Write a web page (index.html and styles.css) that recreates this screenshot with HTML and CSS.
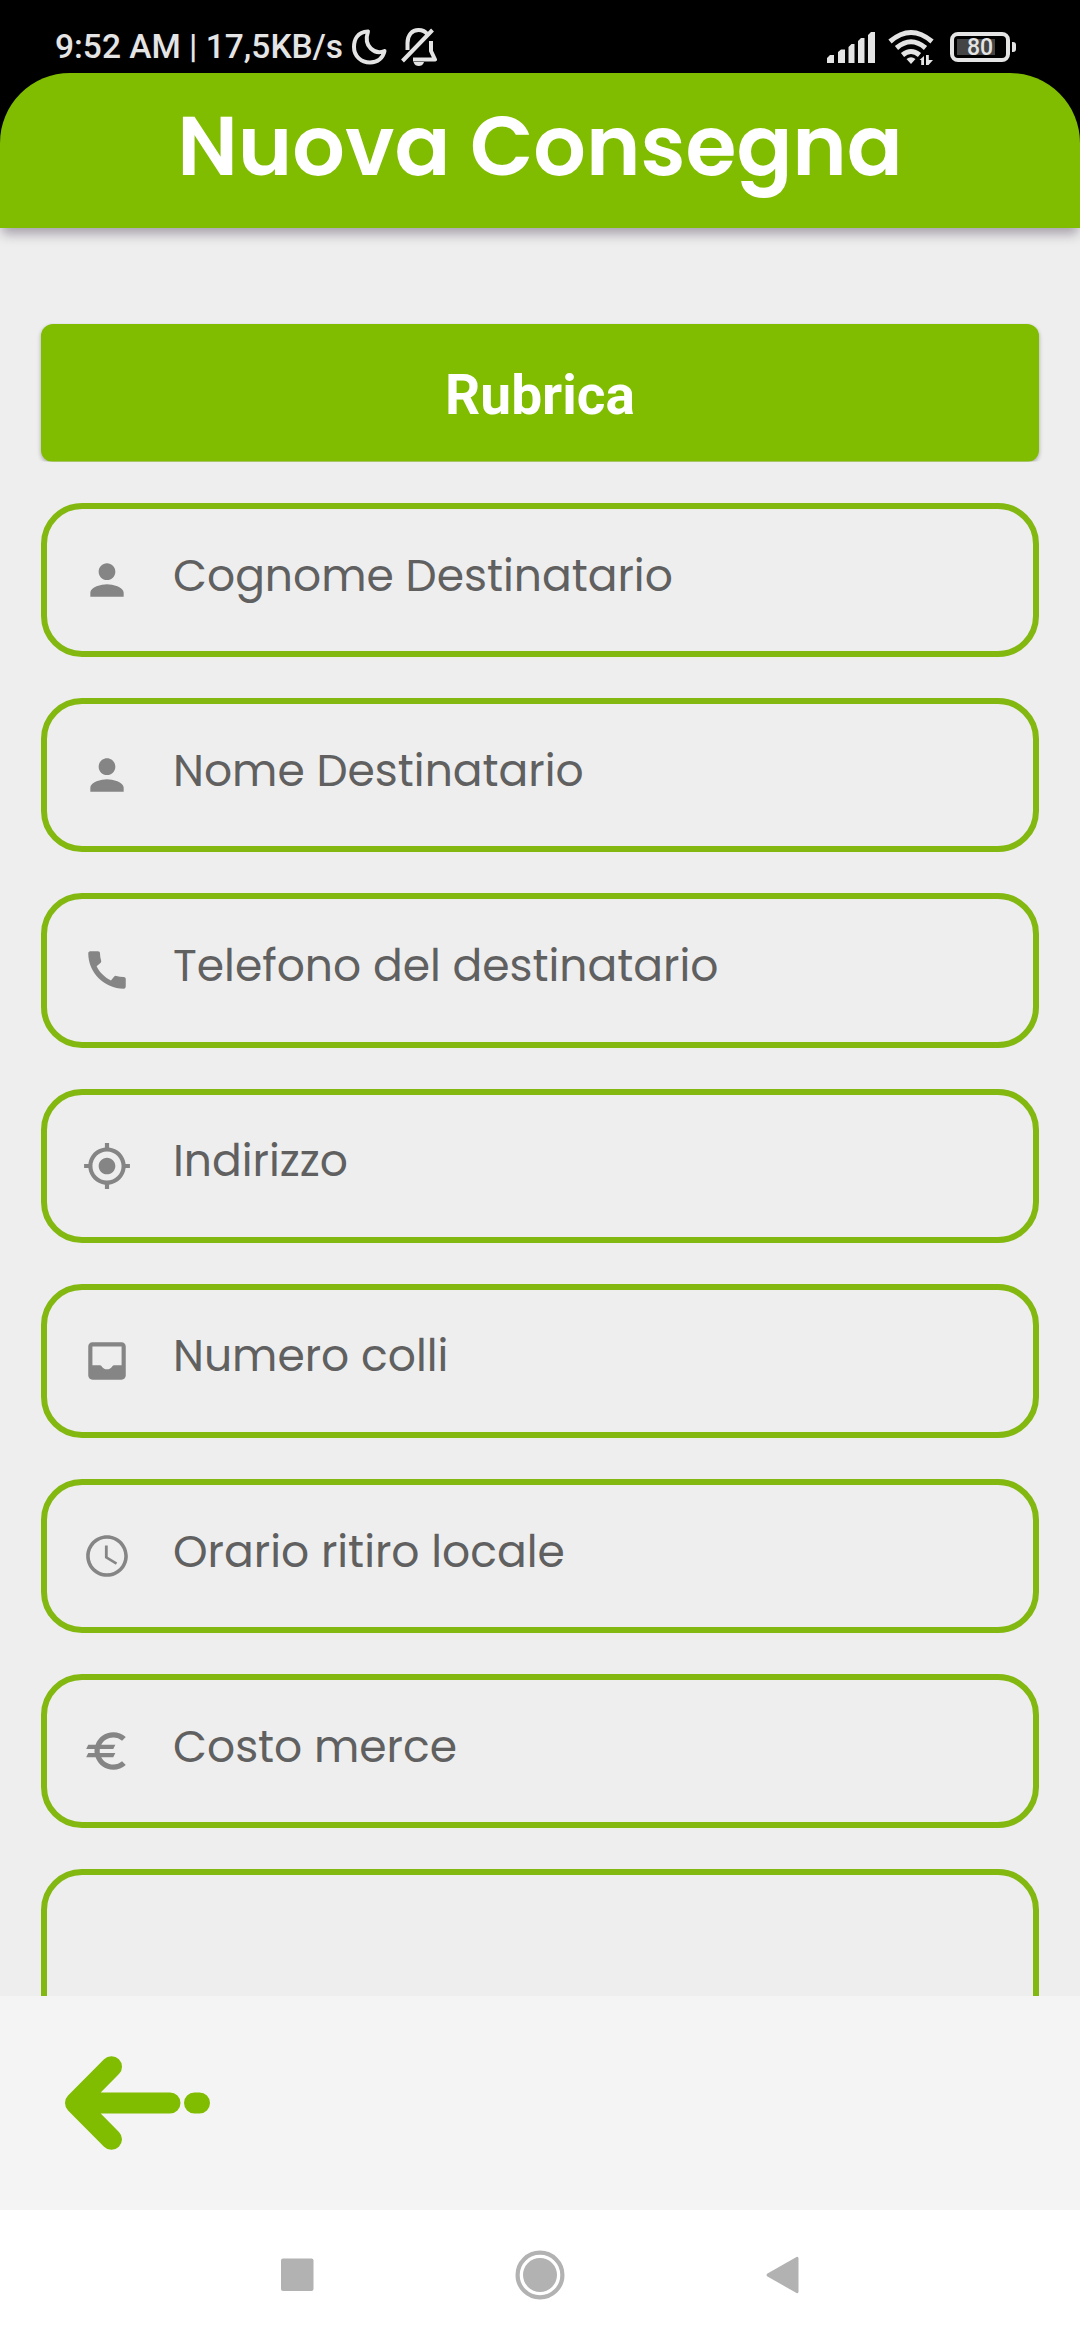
FILE: index.html
```html
<!DOCTYPE html>
<html lang="it">
<head>
<meta charset="utf-8">
<title>Nuova Consegna</title>
<link rel="stylesheet" href="styles.css">
</head>
<body>
<div class="status-bar">
  <span class="status-text">9:52 AM | 17,5KB/s</span>
  <svg class="moon" viewBox="0 0 36 38"><path d="M17 3.500C6 4 3 12 3 19c0 9 7 15.500 16 15.500 8 0 13-5 14.500-11.500C24 27 12 19 17 3.500z"/></svg>
  <svg class="bell" viewBox="0 0 36 40"><path d="M6.500 23V16C6.500 8 11 3 17.500 3c4 0 7 1.500 9 4.500M30 14v10l4 8.500H12M1.500 34L31.500 3"/><path class="solid" d="M12.500 35h10.500c-1 3-3 4-5.200 4s-4.300-1-5.300-4z"/></svg>
  <span class="spacer"></span>
  <svg class="signal" viewBox="0 0 48 32"><path d="M0 32v-5l3-3h4v8zM11 32V21l3-2.500h4V32zM21.500 32V16l3-3h3v19zM31 32V10l3-3h3.500v25zM41 32V4l3-3h4v31z"/></svg>
  <svg class="wifi" viewBox="0 0 46 36"><path class="arc" d="M2 12.500q21-18 42 0M8.500 19q14.500-12.500 29 0M14.500 26q8.500-7 17 0"/><path d="M18.500 30q4.500-3.500 9 0l-4.500 5zM31.500 31l4.500-4v9.500h-2.800V31zM38 26h2.800v5H45l-4.500 5H38z"/></svg>
  <div class="battery"><span class="charge">80</span></div>
</div>
<header class="header"><h1 class="title">Nuova Consegna</h1></header>
<main class="form">
  <button class="contacts">Rubrica</button>
  <div class="field"><svg class="icon" viewBox="0 0 24 24"><path d="M12 12c2.210 0 4-1.790 4-4s-1.790-4-4-4-4 1.790-4 4 1.790 4 4 4zm0 2c-2.670 0-8 1.340-8 4v2h16v-2c0-2.660-5.330-4-8-4z"/></svg><span class="label">Cognome Destinatario</span></div>
  <div class="field"><svg class="icon" viewBox="0 0 24 24"><path d="M12 12c2.210 0 4-1.790 4-4s-1.790-4-4-4-4 1.790-4 4 1.790 4 4 4zm0 2c-2.670 0-8 1.340-8 4v2h16v-2c0-2.660-5.330-4-8-4z"/></svg><span class="label">Nome Destinatario</span></div>
  <div class="field"><svg class="icon" viewBox="0 0 24 24"><path d="M20.010 15.380c-1.230 0-2.420-.2-3.530-.56a.977.977 0 0 0-1.010.24l-1.570 1.970c-2.830-1.350-5.480-3.900-6.890-6.830l1.950-1.660c.27-.28.350-.67.240-1.020-.37-1.110-.56-2.300-.56-3.530 0-.54-.45-.99-.99-.99H4.190C3.650 3 3 3.240 3 3.990 3 13.280 10.730 21 20.010 21c.71 0 .99-.63.990-1.180v-3.450c0-.54-.45-.99-.99-.99z"/></svg><span class="label">Telefono del destinatario</span></div>
  <div class="field"><svg class="icon" viewBox="0 0 24 24"><path d="M12 8c-2.210 0-4 1.790-4 4s1.790 4 4 4 4-1.790 4-4-1.790-4-4-4zm8.940 3c-.46-4.170-3.770-7.480-7.940-7.940V1h-2v2.060C6.830 3.520 3.520 6.830 3.060 11H1v2h2.060c.46 4.170 3.770 7.480 7.940 7.940V23h2v-2.060c4.170-.46 7.480-3.770 7.940-7.940H23v-2h-2.060zM12 19c-3.870 0-7-3.130-7-7s3.130-7 7-7 7 3.130 7 7-3.130 7-7 7z"/></svg><span class="label">Indirizzo</span></div>
  <div class="field"><svg class="icon" viewBox="0 0 24 24"><path d="M19 3H5c-1.100 0-2 .9-2 2v14c0 1.100.9 2 2 2h14c1.100 0 2-.9 2-2V5c0-1.100-.9-2-2-2zm0 11h-3.560c-.36 0-.68.190-.86.500-.52.900-1.470 1.500-2.580 1.500s-2.060-.6-2.580-1.500c-.18-.31-.51-.5-.86-.5H5V5h14v9z"/></svg><span class="label">Numero colli</span></div>
  <div class="field"><svg class="icon" viewBox="0 0 24 24"><path d="M11.990 2C6.470 2 2 6.480 2 12s4.470 10 9.990 10C17.520 22 22 17.520 22 12S17.520 2 11.990 2zM12 20.300c-4.580 0-8.300-3.720-8.300-8.300S7.420 3.700 12 3.700s8.300 3.720 8.300 8.300-3.720 8.300-8.300 8.300zM12.350 7H11v6l5.250 3.150.65-1.070-4.550-2.780z"/></svg><span class="label">Orario ritiro locale</span></div>
  <div class="field"><svg class="icon" viewBox="0 0 24 24"><path d="M15 18.500c-2.510 0-4.680-1.420-5.760-3.500H15l1-2H8.580c-.05-.33-.08-.66-.08-1s.03-.67.080-1H15l1-2H9.240C10.320 6.920 12.500 5.500 15 5.500c1.610 0 3.090.59 4.230 1.570L21 5.300C19.410 3.870 17.300 3 15 3c-3.920 0-7.240 2.510-8.480 6H3l-1 2h4.060c-.04.33-.06.66-.06 1s.02.67.060 1H3l-1 2h4.520c1.240 3.490 4.560 6 8.480 6 2.310 0 4.410-.87 6-2.300l-1.780-1.770c-1.130.98-2.600 1.570-4.220 1.570z"/></svg><span class="label">Costo merce</span></div>
  <div class="field field-notes"></div>
</main>
<footer class="footer">
  <svg class="back" viewBox="0 0 146 94"><path d="M105 47H10.500M46.500 10.700L10.500 47l36 36.300M129.500 47h5"/></svg>
</footer>
<nav class="nav">
  <svg class="nav-icon" viewBox="0 0 50 50"><rect x="9" y="8.500" width="32.500" height="32.500" rx="2"/></svg>
  <svg class="nav-icon" viewBox="0 0 50 50"><circle cx="25" cy="25" r="17"/><circle class="ring" cx="25" cy="25" r="22.400"/></svg>
  <svg class="nav-icon" viewBox="0 0 50 50"><path d="M9.500 23.500L38.500 7q2-.7 2 1.500v33q0 2.200-2 1.500L9.500 26.500q-2-1.500 0-3z"/></svg>
</nav>
</body>
</html>
```
FILE: styles.css
```css
* { box-sizing: border-box; }

body {
  display: flex;
  flex-direction: column;
  width: 1080px;
  height: 2340px;
  margin: 0;
  overflow: hidden;
  background: #000;
  font-family: Poppins, Inter, "Noto Sans", sans-serif;
}

svg { display: block; flex: none; }

.status-bar {
  display: flex;
  flex: none;
  align-items: center;
  height: 73px;
  padding: 20px 70px 0 55px;
  color: #e4e4e4;
  fill: #e4e4e4;
}
.status-text {
  width: 296px;
  font: 500 33.500px/40px Roboto, sans-serif;
  white-space: nowrap;
}
.moon { width: 36px; height: 38px; fill: none; stroke: #e4e4e4; stroke-width: 4; stroke-linejoin: round; }
.bell { width: 36px; height: 40px; margin-left: 14px; fill: none; stroke: #e4e4e4; stroke-width: 4; stroke-linejoin: round; }
.bell .solid { fill: #e4e4e4; stroke: none; }
.spacer { flex: 1; }
.signal { width: 48px; height: 32px; }
.wifi { width: 46px; height: 36px; margin-left: 13px; }
.wifi .arc { fill: none; stroke: #e4e4e4; stroke-width: 5; }
.battery {
  position: relative;
  display: flex;
  width: 60px;
  height: 30px;
  margin-left: 16px;
  padding: 3px;
  border: 4px solid #e4e4e4;
  border-radius: 8px;
}
.battery::after {
  content: "";
  position: absolute;
  top: 6px;
  right: -10px;
  width: 4px;
  height: 10px;
  border-radius: 0 3px 3px 0;
  background: #e4e4e4;
}
.charge {
  width: 38px;
  height: 16px;
  padding-left: 10px;
  background: #444;
  font: 500 23px/17px Roboto, sans-serif;
}

.header {
  z-index: 1;
  display: flex;
  flex: none;
  justify-content: center;
  height: 155px;
  border-radius: 70px 70px 0 0;
  background: #80bc00;
  box-shadow: 0 8px 12px -2px rgba(60, 45, 70, .4);
}
.title {
  margin: 0;
  color: #fff;
  font-size: 82.500px;
  font-weight: 600;
  line-height: 147px;
  white-space: nowrap;
}

.form {
  display: flex;
  flex-direction: column;
  height: 1767.500px;
  padding: 96px 41px 0;
  overflow: hidden;
  background: #eee;
}
.contacts {
  flex: none;
  height: 137.500px;
  margin: 0 0 41.500px;
  padding: 5px 0 0;
  border: 0;
  border-radius: 12px;
  background: #80bc00;
  box-shadow: 0 2px 4px rgba(0, 0, 0, .3);
  clip-path: inset(-1px -6px 0);
  color: #fff;
  font: 700 55px/66px Roboto, sans-serif;
}
.field {
  display: flex;
  flex: none;
  align-items: center;
  height: 154.200px;
  margin-bottom: 41px;
  padding-left: 35px;
  border: 6px solid #82b810;
  border-radius: 41px;
}
.field-notes { height: 260px; }
.icon { width: 50px; height: 50px; fill: #858585; }
.label {
  margin: -9px 0 0 41px;
  color: #606060;
  font-size: 44px;
  line-height: 60px;
  white-space: nowrap;
}

.footer {
  display: flex;
  flex: none;
  align-items: center;
  height: 214.500px;
  padding-left: 65px;
  background: #f4f4f4;
}
.back { width: 146px; height: 94px; fill: none; stroke: #80bc00; stroke-width: 21; stroke-linecap: round; stroke-linejoin: round; }

.nav {
  display: flex;
  flex: 1;
  justify-content: center;
  gap: 193px;
  padding-top: 40px;
  background: #fff;
}
.nav-icon { width: 50px; height: 50px; fill: #b2b2b2; }
.nav-icon .ring { fill: none; stroke: #b2b2b2; stroke-width: 4.200; }
```
